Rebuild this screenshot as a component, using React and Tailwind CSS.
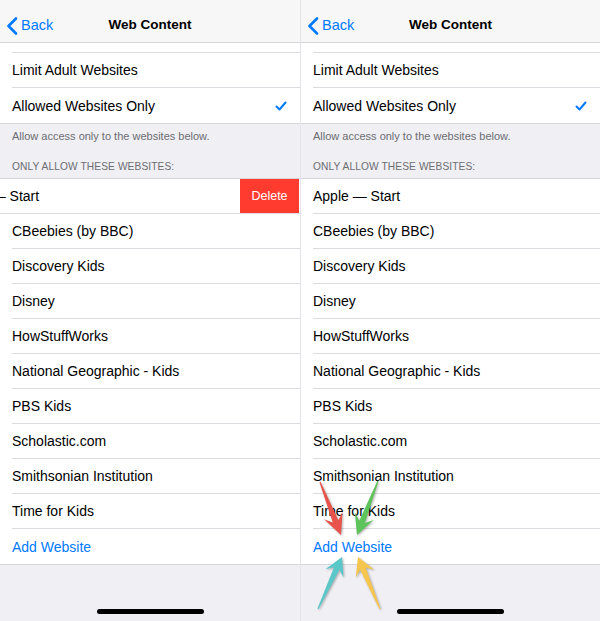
import React from "react";

const sites = [
  "Apple — Start",
  "CBeebies (by BBC)",
  "Discovery Kids",
  "Disney",
  "HowStuffWorks",
  "National Geographic - Kids",
  "PBS Kids",
  "Scholastic.com",
  "Smithsonian Institution",
  "Time for Kids",
];

const font = { fontFamily: '"Liberation Sans", Arial, sans-serif' };

// tapered arrow polygon from tail (tx,ty) to tip (px,py)
function arrowPoints(tx, ty, px, py, headLen = 20, barbW = 10, shaftW = 3) {
  const len = Math.hypot(px - tx, py - ty);
  const dx = (px - tx) / len;
  const dy = (py - ty) / len;
  const nx = -dy;
  const ny = dx;
  const hx = px - dx * headLen * 0.7;
  const hy = py - dy * headLen * 0.7;
  const bx = px - dx * headLen;
  const by = py - dy * headLen;
  const pts = [
    [tx + nx * 0.6, ty + ny * 0.6],
    [hx + nx * shaftW, hy + ny * shaftW],
    [bx + nx * barbW, by + ny * barbW],
    [px, py],
    [bx - nx * barbW, by - ny * barbW],
    [hx - nx * shaftW, hy - ny * shaftW],
    [tx - nx * 0.6, ty - ny * 0.6],
  ];
  return pts.map((p) => p.join(",")).join(" ");
}

function Chevron() {
  return (
    <svg width="12" height="18" viewBox="0 0 12 18" fill="none">
      <path d="M10 1.5 L2.5 9 L10 16.5" stroke="#007aff" strokeWidth="2.6" strokeLinecap="round" strokeLinejoin="round" />
    </svg>
  );
}

function Check() {
  return (
    <svg width="12" height="10" viewBox="0 0 12 10" fill="none">
      <path d="M1.5 5.5 L4.5 8.5 L10.5 1.5" stroke="#007aff" strokeWidth="2" strokeLinecap="round" strokeLinejoin="round" />
    </svg>
  );
}

function Row({ children, last }) {
  return (
    <div className="h-[35px] pl-3 bg-white">
      <div className={`h-full flex items-center pr-3 pt-px text-[14px] text-black ${last ? "" : "border-b border-[#dcdce0]"}`}>
        {children}
      </div>
    </div>
  );
}

function Panel({ swiped }) {
  return (
    <div className="relative flex-1 flex flex-col bg-[#efeff4] overflow-hidden" style={font}>
      {/* Nav bar */}
      <div className="relative h-[43px] bg-[#f7f7f7] border-b border-[#d6d6da] flex items-center pt-[9px]">
        <div className="flex items-center gap-[3px] pl-[6px]">
          <Chevron />
          <span className="text-[14.5px] text-[#007aff]">Back</span>
        </div>
        <div className="absolute inset-0 pt-[9px] flex items-center justify-center text-[13.5px] font-bold text-black">
          Web Content
        </div>
      </div>

      {/* Filter group */}
      <div className="bg-white border-b border-[#d6d6da]">
        <div className="h-[10px] pl-3">
          <div className="h-full border-b border-[#dcdce0]" />
        </div>
        <Row>Limit Adult Websites</Row>
        <Row last>
          <span className="flex-1">Allowed Websites Only</span>
          <span className="pr-[1px]"><Check /></span>
        </Row>
      </div>

      <div className="h-[54px] flex flex-col justify-between px-3 pt-[6px] pb-[5px]">
        <div className="text-[11px] leading-[13px] text-[#6d6d72]">Allow access only to the websites below.</div>
        <div className="text-[10.2px] leading-[12px] text-[#6d6d72] tracking-[0.1px]">ONLY ALLOW THESE WEBSITES:</div>
      </div>

      {/* Websites list */}
      <div className="bg-white border-y border-[#d6d6da]">
        {swiped ? (
          <div className="h-[35px] flex overflow-hidden border-b border-[#dcdce0]">
            <div className="w-full shrink-0 -ml-[60px] pl-3 pt-px flex items-center text-[14px] text-black whitespace-nowrap">
              {sites[0]}
            </div>
            <div className="w-[59px] shrink-0 bg-[#ff3b30] flex items-center justify-center text-white text-[12.5px]">
              Delete
            </div>
          </div>
        ) : (
          <Row>{sites[0]}</Row>
        )}
        {sites.slice(1).map((s) => (
          <Row key={s}>{s}</Row>
        ))}
        <Row last>
          <span className="text-[#007aff]">Add Website</span>
        </Row>
      </div>

      <div className="flex-1 flex items-end justify-center pb-[7px]">
        <div className="w-[107px] h-[5px] rounded-full bg-black" />
      </div>
    </div>
  );
}

export default function App() {
  return (
    <div className="w-[600px] h-[621px] flex bg-[#e3e3e8] gap-px overflow-hidden">
      <div className="w-[300px] flex">
        <Panel swiped />
      </div>
      <div className="relative w-[299px] flex">
        <Panel />
        {/* pointer arrows around Add Website */}
        <svg
          className="absolute inset-0 pointer-events-none drop-shadow-[1px_1px_1px_rgba(0,0,0,0.3)]"
          width="299"
          height="621"
          viewBox="301 0 299 621"
        >
          <polygon points={arrowPoints(320, 482, 341, 535, 21, 10)} fill="#e8544b" />
          <polygon points={arrowPoints(378, 481, 357, 535, 20, 10)} fill="#5ec35a" />
          <polygon points={arrowPoints(318, 609, 342, 557, 18, 10)} fill="#5cc7c9" />
          <polygon points={arrowPoints(380, 609, 358, 557, 18, 10)} fill="#f6c54d" />
        </svg>
      </div>
    </div>
  );
}
